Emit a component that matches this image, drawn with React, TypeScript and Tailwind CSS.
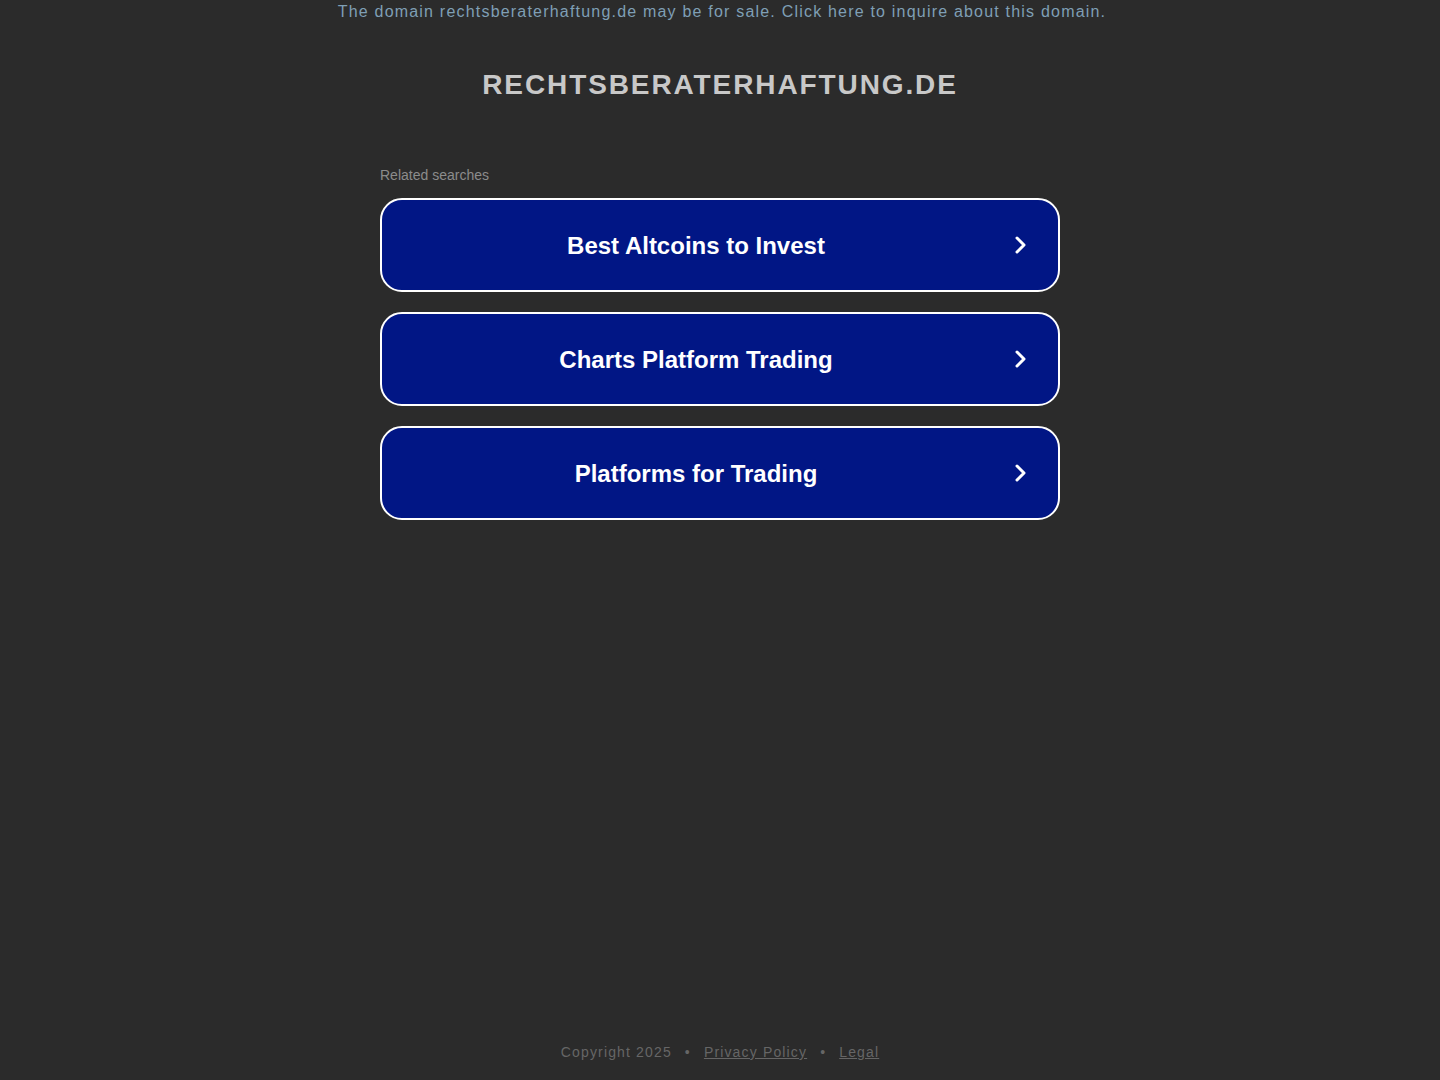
const searches = ["Best Altcoins to Invest", "Charts Platform Trading", "Platforms for Trading"];

function Chevron() {
  return (
    <svg className="w-6 h-6" viewBox="0 0 24 24" fill="none" stroke="currentColor" strokeWidth={3} aria-hidden="true">
      <path strokeLinecap="round" strokeLinejoin="round" d="M9 5l7 7-7 7" />
    </svg>
  );
}

export default function App() {
  return (
    <div className="min-h-[1080px] bg-[#2b2b2b] flex flex-col items-center font-['Liberation_Sans',Arial,sans-serif]">
      <p className="text-[16px] leading-[23px] tracking-[1.2px] text-[#7f9fb5] pl-[4px]">
        The domain rechtsberaterhaftung.de may be for sale. Click here to inquire about this domain.
      </p>
      <h1 className="mt-[44px] text-[28px] leading-[36px] font-bold tracking-[1.9px] text-[#c8c8c8]">
        RECHTSBERATERHAFTUNG.DE
      </h1>
      <div className="w-[680px] mt-[64px]">
        <p className="text-[14px] leading-[16px] text-[#8c8c8c] mb-[15px]">Related searches</p>
        <div className="flex flex-col gap-[20px]">
          {searches.map((s) => (
            <a
              key={s}
              href="#"
              className="h-[94px] bg-[#011685] border-2 border-white rounded-[22px] flex items-center pl-[2px] pr-[26px] text-white"
            >
              <span className="flex-1 text-center text-[24px] font-bold pt-[2px]">{s}</span>
              <Chevron />
            </a>
          ))}
        </div>
      </div>
      <div className="flex-1" />
      <footer className="pb-[17px] text-[14px] tracking-[1.15px] text-[#666666] flex gap-[13px]">
        <span>Copyright 2025</span>
        <span>•</span>
        <a href="#" className="underline">Privacy Policy</a>
        <span>•</span>
        <a href="#" className="underline">Legal</a>
      </footer>
    </div>
  );
}
